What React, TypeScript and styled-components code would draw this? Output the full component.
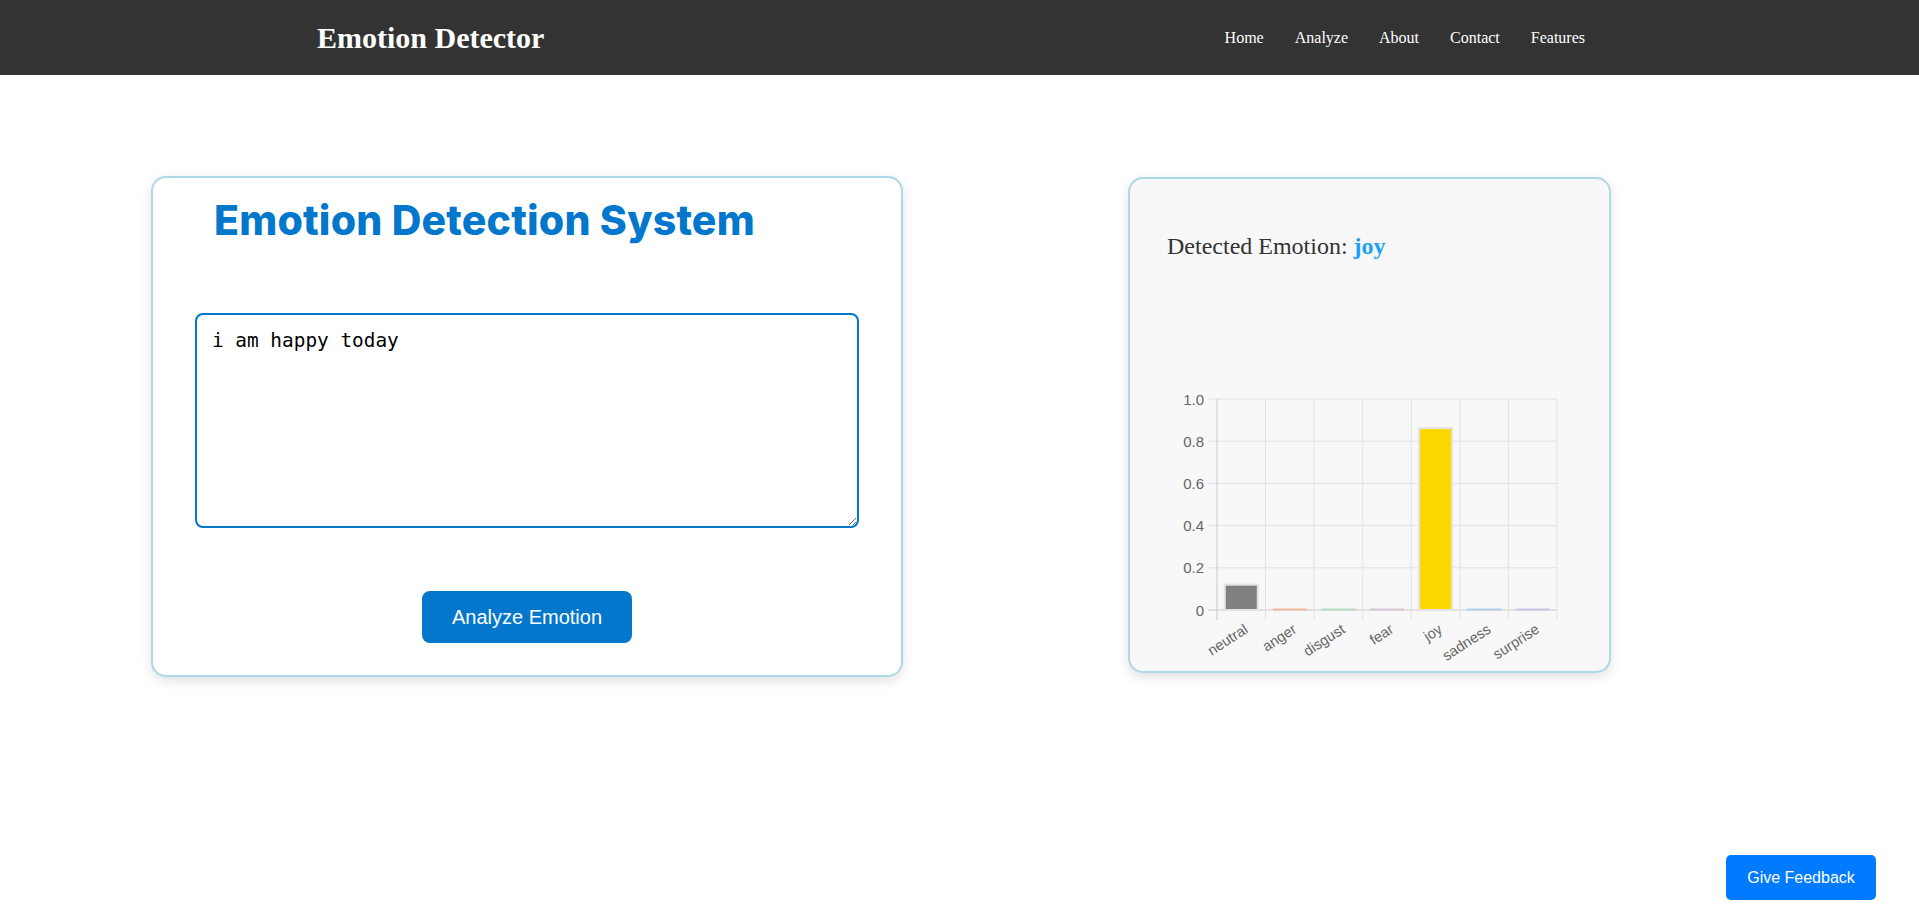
import React, { useState } from "react";
import styled, { createGlobalStyle } from "styled-components";

const GlobalStyle = createGlobalStyle`
  html, body {
    margin: 0;
    padding: 0;
    background: #ffffff;
  }
  body {
    font-family: "Liberation Serif", "Times New Roman", serif;
  }
  * {
    box-sizing: border-box;
  }
`;

const Page = styled.div`
  min-height: 1455px;
  background: #ffffff;
`;

const NavBar = styled.header`
  height: 75px;
  padding-right: 15px;
  background-color: #333333;
  display: flex;
  justify-content: center;
`;

const NavInner = styled.div`
  width: 1270px;
  display: flex;
  align-items: center;
  justify-content: space-between;
`;

const Logo = styled.div`
  color: #ffffff;
  font-family: "Liberation Serif", "Times New Roman", serif;
  font-size: 30px;
  font-weight: bold;
`;

const NavLinks = styled.nav`
  display: flex;
  gap: 31px;
  padding-right: 2px;
`;

const NavLink = styled.a`
  color: #ffffff;
  font-family: "Liberation Serif", "Times New Roman", serif;
  font-size: 16px;
  text-decoration: none;
`;

const Main = styled.main`
  display: flex;
  align-items: flex-start;
  gap: 225px;
  padding: 101px 0 0 151px;
`;

const Card = styled.section<{ $tinted?: boolean }>`
  background: ${(p) => (p.$tinted ? "#f8f8f8" : "#ffffff")};
  border: 2px solid #add8e6;
  border-radius: 15px;
  box-shadow: 0 4px 12px rgba(0, 0, 0, 0.12);
`;

const InputCard = styled(Card)`
  width: 752px;
  height: 501px;
  padding: 17px 42px 0;
  display: flex;
  flex-direction: column;
`;

const Title = styled.h1`
  margin: 0;
  padding-left: 19px;
  font-family: Inter, "Open Sans", sans-serif;
  font-weight: 800;
  font-size: 41px;
  line-height: 50px;
  letter-spacing: 0.2px;
  color: #0277cc;
`;

const TextBox = styled.textarea`
  display: block;
  width: 100%;
  height: 215px;
  margin-top: 68px;
  padding: 14px 15px;
  border: 2px solid #0277cc;
  border-radius: 8px;
  outline: none;
  font-family: "DejaVu Sans Mono", "Liberation Mono", monospace;
  font-size: 19.4px;
  color: #000000;
  background: #ffffff;
`;

const AnalyzeButton = styled.button`
  align-self: center;
  margin-top: 63px;
  padding: 15px 30px;
  border: none;
  border-radius: 8px;
  background-color: #0277cc;
  color: #ffffff;
  font-family: "Liberation Sans", Arial, sans-serif;
  font-size: 20px;
  line-height: 22px;
  cursor: pointer;
`;

const ResultCard = styled(Card)`
  width: 483px;
  height: 496px;
  margin-top: 1px;
  padding: 0 37px 6px;
`;

const ResultText = styled.h2`
  margin: 54px 0 0;
  font-family: "Liberation Serif", "Times New Roman", serif;
  font-size: 24px;
  font-weight: normal;
  color: #333333;
`;

const EmotionName = styled.strong`
  color: #1da1f2;
`;

const ChartWrap = styled.div`
  margin-top: 125px;
  width: 405px;
  height: 280px;
`;

const FeedbackButton = styled.button`
  position: fixed;
  right: 43px;
  bottom: 6px;
  width: 150px;
  height: 45px;
  border: none;
  border-radius: 5px;
  background-color: #007bff;
  color: #ffffff;
  font-family: "Liberation Sans", Arial, sans-serif;
  font-size: 16px;
  cursor: pointer;
`;

const scores = [
  { label: "neutral", value: 0.12, color: "#808080" },
  { label: "anger", value: 0.004, color: "#f2b8a4" },
  { label: "disgust", value: 0.003, color: "#b7dcc3" },
  { label: "fear", value: 0.002, color: "#d4c6d4" },
  { label: "joy", value: 0.862, color: "#ffd700" },
  { label: "sadness", value: 0.004, color: "#b3cfea" },
  { label: "surprise", value: 0.002, color: "#cdc2e2" },
];

const EmotionChart: React.FC = () => {
  const left = 50;
  const right = 390;
  const top = 14;
  const bottom = 225;
  const h = bottom - top;
  const step = (right - left) / scores.length;
  const barW = 33;
  const ticks = [0, 0.2, 0.4, 0.6, 0.8, 1.0];

  return (
    <svg width="405" height="280" viewBox="0 0 405 280" overflow="visible">
      {ticks.map((t) => {
        const y = bottom - t * h;
        return (
          <g key={t}>
            <line
              x1={left - 9}
              x2={right}
              y1={y}
              y2={y}
              stroke={t === 0 ? "#c8c8c8" : "#e2e2e2"}
              strokeWidth="1"
            />
            <text
              x={37}
              y={y}
              textAnchor="end"
              dominantBaseline="central"
              fontFamily="Liberation Sans, Arial, sans-serif"
              fontSize="15"
              fill="#666666"
            >
              {t === 0 ? "0" : t.toFixed(1)}
            </text>
          </g>
        );
      })}
      {scores.map((_, i) => {
        const x = left + (i + 1) * step;
        return (
          <line
            key={i}
            x1={x}
            x2={x}
            y1={top}
            y2={bottom + 10}
            stroke="#e2e2e2"
            strokeWidth="1"
          />
        );
      })}
      <line x1={left} x2={left} y1={top} y2={bottom + 10} stroke="#c8c8c8" strokeWidth="1" />
      {scores.map((s, i) => {
        const cx = left + (i + 0.5) * step;
        const bh = Math.max(s.value * h, 1);
        return (
          <rect
            key={s.label}
            x={cx - barW / 2}
            y={bottom - bh}
            width={barW}
            height={bh}
            fill={s.color}
            stroke={s.value > 0.05 ? "#e4e4e4" : s.color}
            strokeWidth={s.value > 0.05 ? 2 : 1}
          />
        );
      })}
      {scores.map((s, i) => {
        const cx = left + (i + 0.5) * step;
        return (
          <text
            key={s.label}
            transform={`translate(${cx + 2}, 238) rotate(-33)`}
            textAnchor="end"
            dominantBaseline="hanging"
            fontFamily="Liberation Sans, Arial, sans-serif"
            fontSize="14.5"
            fill="#666666"
          >
            {s.label}
          </text>
        );
      })}
    </svg>
  );
};

export default function App() {
  const [text, setText] = useState("i am happy today");

  return (
    <Page>
      <GlobalStyle />
      <NavBar>
        <NavInner>
          <Logo>Emotion Detector</Logo>
          <NavLinks>
            <NavLink href="#home">Home</NavLink>
            <NavLink href="#analyze">Analyze</NavLink>
            <NavLink href="#about">About</NavLink>
            <NavLink href="#contact">Contact</NavLink>
            <NavLink href="#features">Features</NavLink>
          </NavLinks>
        </NavInner>
      </NavBar>
      <Main>
        <InputCard>
          <Title>Emotion Detection System</Title>
          <TextBox value={text} onChange={(e) => setText(e.target.value)} />
          <AnalyzeButton>Analyze Emotion</AnalyzeButton>
        </InputCard>
        <ResultCard $tinted>
          <ResultText>
            Detected Emotion: <EmotionName>joy</EmotionName>
          </ResultText>
          <ChartWrap>
            <EmotionChart />
          </ChartWrap>
        </ResultCard>
      </Main>
      <FeedbackButton>Give Feedback</FeedbackButton>
    </Page>
  );
}
